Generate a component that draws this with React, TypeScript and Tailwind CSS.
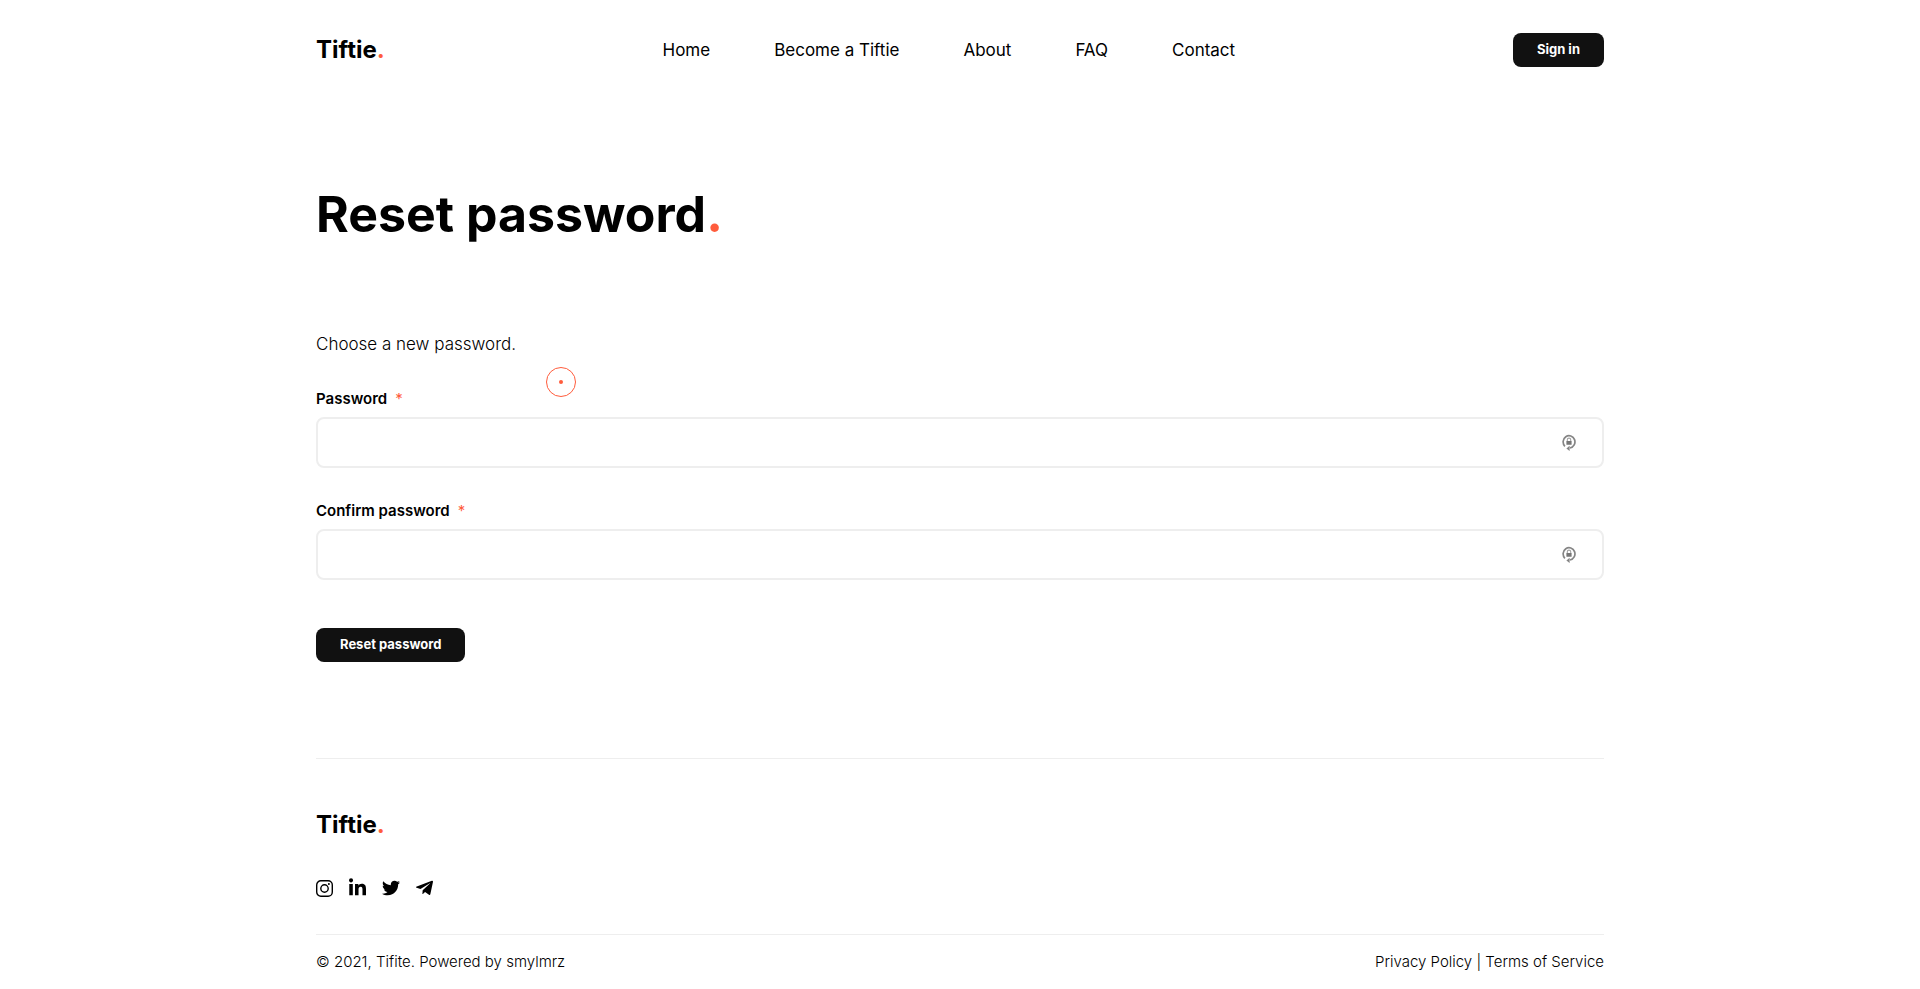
import { FaLinkedinIn, FaTwitter, FaTelegramPlane } from "react-icons/fa";

const navItems = ["Home", "Become a Tiftie", "About", "FAQ", "Contact"];

function InstagramIcon({ className }: { className?: string }) {
  return (
    <svg viewBox="0 0 17 17" className={className} fill="none" stroke="currentColor" aria-hidden="true">
      <rect x="0.7" y="0.7" width="15.6" height="15.6" rx="4.2" strokeWidth="1.4" />
      <circle cx="8.5" cy="8.5" r="3.7" strokeWidth="1.4" />
      <circle cx="12.9" cy="4.1" r="1" fill="currentColor" stroke="none" />
    </svg>
  );
}

const socials = [
  { name: "Instagram", Icon: InstagramIcon, size: "h-[17px] w-[17px]" },
  { name: "LinkedIn", Icon: FaLinkedinIn, size: "h-5 w-[17px]" },
  { name: "Twitter", Icon: FaTwitter, size: "h-[18px] w-[18px]" },
  { name: "Telegram", Icon: FaTelegramPlane, size: "h-5 w-[17px]" },
];

function Logo() {
  return (
    <a href="#" className="text-2xl leading-9 font-bold text-black">
      Tiftie<span className="text-[#ff5c3c]">.</span>
    </a>
  );
}

function LockCycleIcon() {
  return (
    <svg viewBox="0 0 14 18" className="h-[18px] w-[14px]" fill="none" aria-hidden="true">
      <path d="M2.9 12.3A5.9 6.2 0 1 1 8 14" stroke="#858585" strokeWidth="1.7" />
      <path d="M4.4 14.4 7.6 11.8v5.2Z" fill="#858585" />
      <path d="M5.3 7.4V5.8a1.7 1.7 0 0 1 3.4 0v1.6" stroke="#a3a3a3" strokeWidth="1.1" />
      <rect x="4.4" y="7" width="5.2" height="3.8" rx="0.4" fill="#777777" />
    </svg>
  );
}

function PasswordField({ id, label }: { id: string; label: string }) {
  return (
    <div>
      <label htmlFor={id} className="block text-[15px] leading-[21px] font-semibold">
        {label}
        <span className="ml-2 font-normal text-[#ff5c3c]">*</span>
      </label>
      <div className="relative mt-2">
        <input
          id={id}
          type="password"
          required
          className="block h-[51px] w-full rounded-lg border-2 border-[#eeeeee] bg-white pr-14 pl-5 text-base outline-none focus:border-neutral-400"
        />
        <span className="pointer-events-none absolute inset-y-0 right-7 flex items-center">
          <LockCycleIcon />
        </span>
      </div>
    </div>
  );
}

export default function App() {
  return (
    <div className="relative min-h-screen bg-white font-['Inter',sans-serif] text-black">
      <div className="mx-auto max-w-[1336px] px-6">
        <header className="flex h-[100px] items-center justify-between">
          <Logo />
          <nav className="flex gap-16 text-[17px] leading-6">
            {navItems.map((item) => (
              <a key={item} href="#">
                {item}
              </a>
            ))}
          </nav>
          <button type="button" className="h-[34px] rounded-lg bg-[#111111] px-6 text-[13px] font-bold text-white">
            Sign in
          </button>
        </header>

        <main className="pt-[78px]">
          <h1 className="text-[50px] leading-[72px] font-bold">
            Reset password<span className="text-[#ff5c3c]">.</span>
          </h1>
          <form className="pt-[82px]" onSubmit={(event) => event.preventDefault()}>
            <p className="text-[17px] leading-6 font-light">Choose a new password.</p>
            <div className="mt-8 flex flex-col gap-8">
              <PasswordField id="password" label="Password" />
              <PasswordField id="confirm-password" label="Confirm password" />
            </div>
            <button
              type="submit"
              className="mt-12 block h-[34px] rounded-lg bg-[#111111] px-6 text-[13px] font-bold text-white"
            >
              Reset password
            </button>
          </form>
        </main>

        <footer className="mt-24 border-t border-[#eeeeee] pt-12">
          <Logo />
          <div className="mt-[35px] flex items-center gap-4">
            {socials.map(({ name, Icon, size }) => (
              <a key={name} href="#" aria-label={name}>
                <Icon className={size} />
              </a>
            ))}
          </div>
          <div className="mt-9 flex justify-between border-t border-[#eeeeee] pt-4 pb-4 text-[15px] leading-[21px] font-light">
            <p>© 2021, Tifite. Powered by smylmrz</p>
            <p>
              <a href="#">Privacy Policy</a> | <a href="#">Terms of Service</a>
            </p>
          </div>
        </footer>
      </div>

      <div
        className="pointer-events-none absolute top-[367px] left-[546px] flex size-[30px] items-center justify-center rounded-full border border-[#ff5c3c]"
        aria-hidden="true"
      >
        <span className="size-1 rounded-full bg-[#ff5c3c]" />
      </div>
    </div>
  );
}
